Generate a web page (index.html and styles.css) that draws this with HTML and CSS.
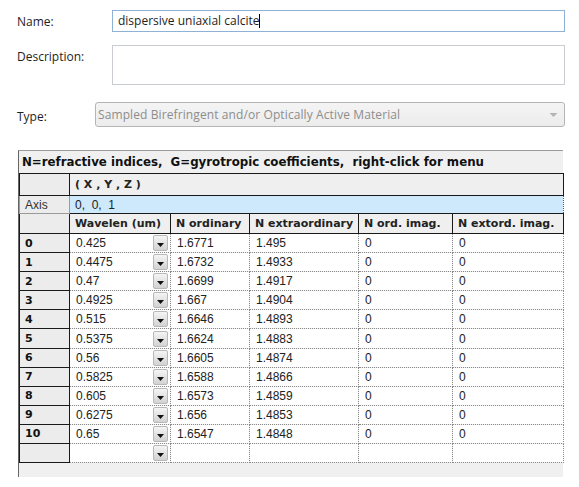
FILE: index.html
```html
<!DOCTYPE html>
<html lang="en">
<head>
  <meta charset="UTF-8">
  <title>Material Editor</title>
  <link rel="stylesheet" href="styles.css">
</head>
<body>

  <div class="form">
    <div class="form-row name-row">
      <label class="field-label">Name:</label>
      <div class="text-field name-field">dispersive uniaxial calcite<span class="caret"></span></div>
    </div>
    <div class="form-row desc-row">
      <label class="field-label">Description:</label>
      <div class="text-field desc-field"></div>
    </div>
    <div class="form-row type-row">
      <label class="field-label">Type:</label>
      <div class="select-field">
        <span>Sampled Birefringent and/or Optically Active Material</span>
        <svg class="select-arrow" width="9" height="6" viewBox="0 0 9 6"><polygon points="0.5,1 8.5,1 4.5,5" fill="#b4b4b4"/></svg>
      </div>
    </div>
  </div>

  <div class="grid-frame">
    <div class="grid-title">N=refractive indices,&nbsp; G=gyrotropic coefficients,&nbsp; right-click for menu</div>
    <table class="grid">
      <colgroup>
        <col class="c-idx">
        <col class="c-wl">
        <col class="c-no">
        <col class="c-ne">
        <col class="c-noi">
        <col class="c-nei">
      </colgroup>
      <tr class="xyz-row">
        <td class="idx"></td>
        <td class="head" colspan="5">( X , Y , Z )</td>
      </tr>
      <tr class="axis-row">
        <td class="idx plain">Axis</td>
        <td class="axis-val" colspan="5">0,&nbsp; 0,&nbsp; 1</td>
      </tr>
      <tr class="head-row">
        <td class="idx"></td>
        <td class="head">Wavelen (um)</td>
        <td class="head">N ordinary</td>
        <td class="head">N extraordinary</td>
        <td class="head">N ord. imag.</td>
        <td class="head">N extord. imag.</td>
      </tr>
    </table>
  </div>

  <script>
    const rows = [
      ['0.425', '1.6771', '1.495'],
      ['0.4475', '1.6732', '1.4933'],
      ['0.47', '1.6699', '1.4917'],
      ['0.4925', '1.667', '1.4904'],
      ['0.515', '1.6646', '1.4893'],
      ['0.5375', '1.6624', '1.4883'],
      ['0.56', '1.6605', '1.4874'],
      ['0.5825', '1.6588', '1.4866'],
      ['0.605', '1.6573', '1.4859'],
      ['0.6275', '1.656', '1.4853'],
      ['0.65', '1.6547', '1.4848']
    ];

    const grid = document.querySelector('.grid');
    const arrow = '<span class="drop-btn"><svg width="7" height="4" viewBox="0 0 7 4"><polygon points="0,0 7,0 3.5,4" fill="#111"/></svg></span>';

    function addRow(label, wl, no, ne, noi, nei) {
      const tr = document.createElement('tr');
      tr.className = 'data-row';
      tr.innerHTML =
        '<td class="idx">' + label + '</td>' +
        '<td class="cell"><div class="wl"><span>' + wl + '</span>' + arrow + '</div></td>' +
        '<td class="cell">' + no + '</td>' +
        '<td class="cell">' + ne + '</td>' +
        '<td class="cell">' + noi + '</td>' +
        '<td class="cell">' + nei + '</td>';
      grid.appendChild(tr);
    }

    rows.forEach((r, i) => addRow(i, r[0], r[1], r[2], '0', '0'));
    addRow('', '', '', '', '', ''); // blank row for new entries
  </script>

</body>
</html>
```

FILE: styles.css
```css
body { margin: 0; font-family: "Open Sans", "Noto Sans", sans-serif; font-size: 12px; color: #1e1e1e; background: #fff; }

.form { padding: 10px 14px 0 17px; }
.form-row { display: flex; }
.field-label { flex: 0 0 auto; }
.name-row { align-items: center; height: 22px; }
.name-row .field-label { width: 95px; }
.desc-row { margin-top: 13px; }
.desc-row .field-label { width: 95px; padding-top: 3px; }
.type-row { margin-top: 17px; align-items: center; height: 25px; }
.type-row .field-label { width: 78px; padding-top: 3px; }

.text-field { flex: 1; box-sizing: border-box; border: 1px solid #c9ccd1; background: #fff; padding: 0 5px; }
.name-field { height: 22px; line-height: 20px; border-color: #8fb1d6; }
.desc-field { height: 40px; }
.caret { display: inline-block; width: 1px; height: 14px; background: #000; vertical-align: -3px; }

.select-field { flex: 1; box-sizing: border-box; height: 25px; display: flex; align-items: center; justify-content: space-between; padding: 0 6px 0 2px; border: 1px solid #b5b5b5; border-radius: 3px; background: linear-gradient(#f4f4f4, #ececec); color: #8d8d8d; letter-spacing: 0.1px; }
.select-arrow { margin-top: 1px; }

.grid-frame { margin: 23px 0 0 18px; width: 545px; height: 327px; box-sizing: border-box; border-top: 1px solid #9a9a9a; border-left: 1px solid #666; background: #f0f0f0; font-family: "Liberation Sans", Arial, sans-serif; font-size: 12px; color: #222; }
.grid-title { height: 22px; line-height: 22px; padding-left: 3px; font-family: "DejaVu Sans", sans-serif; font-size: 11.8px; font-weight: bold; color: #111; }

.grid { border-collapse: collapse; table-layout: fixed; width: 544px; }
.c-idx { width: 50px; }
.c-wl { width: 101px; }
.c-no { width: 79px; }
.c-ne { width: 109px; }
.c-noi { width: 94px; }
.c-nei { width: 111px; }

.grid td { padding: 0 0 0 5px; white-space: nowrap; overflow: hidden; }
.idx { border: 1px solid #1a1a1a; background: #ececec; font-family: "DejaVu Sans", sans-serif; font-size: 11px; font-weight: bold; color: #111; }
.idx.plain { font-family: "Liberation Sans", Arial, sans-serif; font-size: 12px; font-weight: normal; color: #333; border-color: #9a9a9a; }
.head { border: 1px solid #1a1a1a; background: #efefef; font-family: "DejaVu Sans", sans-serif; font-size: 11px; font-weight: bold; color: #222; }
.xyz-row td { height: 21px; }
.axis-row td { height: 17px; }
.head-row td { height: 19px; }
.axis-val { border: 1px dotted #555; background: #cde9fb; padding-left: 6px; }

.data-row td { height: 18.1px; }
.cell { border: 1px dotted #8a8a8a; background: #fff; }
.grid .data-row .cell { padding-left: 6px; }
.grid .data-row .cell:nth-child(2) { padding-right: 2px; }
.wl { display: flex; align-items: center; justify-content: space-between; }
.drop-btn { display: flex; align-items: flex-end; justify-content: center; box-sizing: border-box; width: 15px; height: 16px; padding-bottom: 3px; border: 1px solid #b8b8b8; border-radius: 2px; background: linear-gradient(#f5f5f5, #d2d2d2); }
```
